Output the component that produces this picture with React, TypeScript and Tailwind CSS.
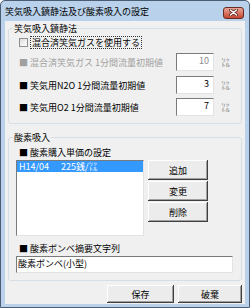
import React from 'react';

const sunken =
  'border border-t-[#7b7b7b] border-l-[#7b7b7b] border-b-[#e3e3e3] border-r-[#e3e3e3] bg-white';

const raised =
  'bg-[#ececec] shadow-[inset_-1px_-1px_0_#404040,inset_1px_1px_0_#ffffff,inset_-2px_-2px_0_#a0a0a0] flex items-center justify-center';

const Group: React.FC<{ title: string; className?: string; children: React.ReactNode }> = ({
  title,
  className,
  children,
}) => (
  <div className={`relative border border-[#d5dfe5] rounded-[3px] ${className ?? ''}`}>
    <span className="absolute top-[-6px] left-[4px] px-[1px] bg-[#f0f0f0] leading-[11px]">{title}</span>
    {children}
  </div>
);

const ValueRow: React.FC<{ label: string; value: string; disabled?: boolean; className?: string }> = ({
  label,
  value,
  disabled,
  className,
}) => (
  <div className={`flex items-center h-[18px] ${className ?? ''}`}>
    <span className={`w-[157px] whitespace-pre ${disabled ? 'text-[#a0a0a0]' : 'text-black'}`}>{label}</span>
    <div
      className={`w-[38px] h-[18px] text-right pr-[4px] pt-[1px] leading-[11px] ${sunken} ${
        disabled ? 'bg-[#f0f0f0] text-[#8a8a8a]' : ''
      }`}
    >
      {value}
    </div>
    <span className="ml-[7px] text-[#777777]">㍑</span>
  </div>
);

export default function App() {
  return (
    <div className="w-[250px] h-[308px] bg-[#b9d1ea] border border-[#4a5d73] rounded-t-[5px] flex flex-col overflow-hidden font-['Noto_Sans_CJK_JP','Liberation_Sans',sans-serif] text-[9px] leading-[11px] text-black">
      {/* title bar */}
      <div className="h-[20px] shrink-0 flex items-center pl-[4px] pr-[5px]">
        <span className="flex-1 pt-[1px]">笑気吸入鎮静法及び酸素吸入の設定</span>
        <div className="w-[21px] h-[12px] mt-[3px] rounded-[3px] border border-[#6b2b25] bg-linear-to-b from-[#e9a596] to-[#c4432f] flex items-center justify-center">
          <svg width="9" height="7" viewBox="0 0 9 7">
            <path d="M1.5 1 L7.5 6 M7.5 1 L1.5 6" stroke="#5a1f18" strokeWidth="3" strokeLinecap="round" />
            <path d="M1.5 1 L7.5 6 M7.5 1 L1.5 6" stroke="#ffffff" strokeWidth="1.6" strokeLinecap="round" />
          </svg>
        </div>
      </div>

      {/* client area */}
      <div className="flex-1 mx-[4px] mb-[3px] bg-[#f0f0f0] px-[3px] flex flex-col">
        <Group title="笑気吸入鎮静法" className="mt-[7px] h-[96px] pl-[10px]">
          <div className="flex items-center h-[13px] mt-[7px]">
            <div className="w-[9px] h-[9px] border border-[#8f8f8f] bg-linear-to-br from-[#dcdcdc] to-[#ffffff]" />
            <span className="ml-[2px] px-[1px] h-[13px] flex items-center border border-dotted border-[#333333]">
              混合済笑気ガスを使用する
            </span>
          </div>
          <ValueRow label="■ 混合済笑気ガス 1分間流量初期値" value="10" disabled className="mt-[4px]" />
          <ValueRow label="■ 笑気用N2O 1分間流量初期値" value="3" className="mt-[5px]" />
          <ValueRow label="■ 笑気用O2 1分間流量初期値" value="7" className="mt-[4px]" />
        </Group>

        <Group title="酸素吸入" className="mt-[13px] h-[144px] pl-[7px]">
          <div className="mt-[9px] h-[11px] pl-[3px]">■ 酸素購入単価の設定</div>
          <div className="flex mt-[2px]">
            <div className={`w-[128px] h-[76px] ${sunken}`}>
              <div className="h-[11px] bg-[#3399ff] text-white pl-[2px] flex items-center">
                <span>H14/04</span>
                <span className="ml-[12px]">225銭/㍑</span>
              </div>
            </div>
            <div className="ml-[4px] flex flex-col gap-[1px]">
              <button className={`w-[60px] h-[20px] ${raised}`}>追加</button>
              <button className={`w-[60px] h-[20px] ${raised}`}>変更</button>
              <button className={`w-[60px] h-[20px] ${raised}`}>削除</button>
            </div>
          </div>
          <div className="mt-[7px] h-[11px] pl-[3px]">■ 酸素ボンベ摘要文字列</div>
          <div className={`mt-[2px] w-[217px] h-[17px] pl-[1px] pt-[1px] ${sunken}`}>酸素ボンベ(小型)</div>
        </Group>

        <div className="mt-[4px] flex justify-end gap-[4px]">
          <button className={`w-[67px] h-[18px] ${raised}`}>保存</button>
          <button className={`w-[64px] h-[18px] ${raised}`}>破棄</button>
        </div>
      </div>
    </div>
  );
}
